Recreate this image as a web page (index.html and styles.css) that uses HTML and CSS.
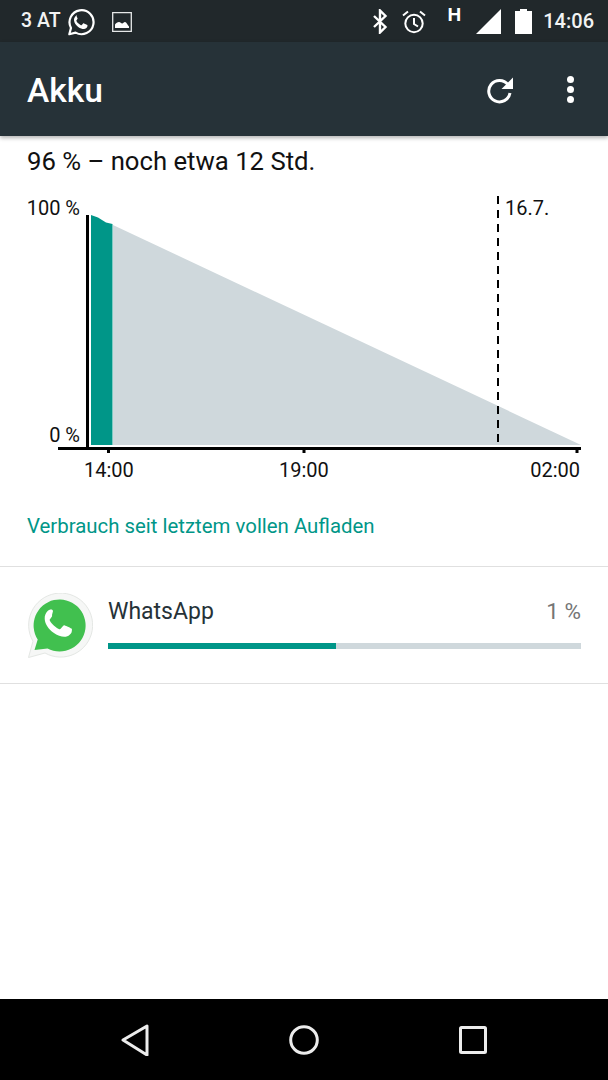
FILE: index.html
```html
<!DOCTYPE html>
<html lang="de">
<head>
<meta charset="utf-8">
<title>Akku</title>
<link rel="stylesheet" href="styles.css">
</head>
<body>
<div class="screen">
  <header class="status">
    <div class="status-left">
      <span class="carrier">3 AT</span>
      <svg class="ic-wa" viewBox="0 0 28 28"><path d="M2.3 26.2l1.7-6.3A12 12 0 1 1 8.600 24.600z" fill="none" stroke="#fff" stroke-width="2.200" stroke-linejoin="round"/><path d="M10.200 7.600c-.5 0-1.300.2-1.900 1-.6.800-1.400 2-1.300 3.700.2 2.600 2 5 4.200 6.700 2.200 1.600 4.300 2.200 5.800 2.100 1.500-.1 3-1.200 3.300-2.300.2-.8.200-1.500.1-1.700-.2-.3-3-1.600-3.500-1.700-.4-.1-.7 0-1 .4l-1.100 1.300c-.2.300-.5.300-.9.100-1.200-.5-3.600-2.300-4.500-4.200-.2-.4 0-.6.200-.8l.8-1.100c.2-.3.200-.6.100-.9l-1.200-2.800c-.1-.4-.3-.8-.8-.8z" fill="#fff"/></svg>
      <svg class="ic-img" viewBox="0 0 20 20"><path d="M.7.700h18.600v18.600H.7z" fill="none" stroke="#e6e8e8" stroke-width="1.300"/><path d="M3 16v-3.500c1-1.500 2.500-2.500 4-2.500 1.500 0 2 1.500 3.200 1.500 1 0 1.500-1.500 2.800-1.500 1.500 0 2.500 3 4 4.500V16z" fill="#fff"/></svg>
    </div>
    <div class="status-right">
      <svg class="ic-bt" viewBox="0 0 16 25"><path d="M2 7l11.500 11-5.500 5.500V1.500L13.500 7 2 18" fill="none" stroke="#fff" stroke-width="2.400"/></svg>
      <svg class="ic-alarm" viewBox="0 0 24 24"><circle cx="12" cy="13.500" r="8.700" fill="none" stroke="#fff" stroke-width="2"/><path d="M12 8v6l4 2.500M1 5.500L6 1.500M23 5.500L18 1.500" fill="none" stroke="#fff" stroke-width="2"/></svg>
      <span class="net">H</span>
      <svg class="ic-signal" viewBox="0 0 25 25"><path d="M0 25L25 0v25z" fill="#fff"/></svg>
      <svg class="ic-batt" viewBox="0 0 17 25"><path d="M5 0h7v2h5v23H0V2h5z" fill="#fff"/></svg>
      <span class="clock">14:06</span>
    </div>
  </header>

  <div class="appbar">
    <h1 class="title">Akku</h1>
    <div class="actions">
      <svg class="ic-refresh" viewBox="0 0 28 28"><path d="M22 8.700A10.700 10.700 0 1 0 24 17" fill="none" stroke="#fff" stroke-width="3"/><path d="M27 1.500V13H15.500z" fill="#fff"/></svg>
      <div class="dots"><i></i><i></i><i></i></div>
    </div>
  </div>

  <main class="content">
    <p class="summary">96 % – noch etwa 12 Std.</p>

    <div class="chart">
      <svg class="plot" viewBox="0 0 608 300" width="608" height="300">
        <path class="area" d="M113 36L581 256H113z"/>
        <path class="used" d="M91 26L98 28.500L106 33.500L112.500 35V256H91z"/>
        <path class="axis-y" d="M87.500 26V260"/>
        <path class="axis-x" d="M58 259.500H581"/>
        <path class="tick" d="M108.500 259V264M304 259V264M577 259V264"/>
        <path class="dash" d="M498 7V256"/>
      </svg>
      <span class="lbl lbl-100">100 %</span>
      <span class="lbl lbl-0">0 %</span>
      <span class="lbl lbl-date">16.7.</span>
      <span class="lbl lbl-t1">14:00</span>
      <span class="lbl lbl-t2">19:00</span>
      <span class="lbl lbl-t3">02:00</span>
    </div>

    <p class="since">Verbrauch seit letztem vollen Aufladen</p>

    <section class="app-row">
      <svg class="app-icon" viewBox="0 0 66 66">
        <path d="M1.500 64.500l4.500-16.300A32 32 0 1 1 18 60z" fill="#f6f7f6" stroke="#e4e7e4" stroke-width="1"/>
        <path d="M7.500 57l3.200-10.500A26 26 0 1 1 20.500 55.500z" fill="#41c04f"/>
        <path d="M24 16.500c-1 0-2.600.4-3.800 2-1.200 1.500-2.800 4-2.500 7.500.4 5.300 4 10.200 8.500 13.500 4.400 3.300 8.700 4.500 11.700 4.300 3-.2 6-2.400 6.700-4.600.4-1.600.4-3 .2-3.400-.4-.6-6-3.200-7-3.400-.8-.2-1.400 0-2 .8l-2.200 2.600c-.4.600-1 .6-1.800.2-2.400-1-7.200-4.600-9-8.400-.4-.8 0-1.200.4-1.600l1.600-2.200c.4-.6.400-1.200.2-1.800L26 18c-.2-.8-.6-1.500-2-1.500z" fill="#fff"/>
      </svg>
      <div class="app-body">
        <div class="app-head"><span class="app-name">WhatsApp</span><span class="app-pct">1 %</span></div>
        <div class="bar"><div class="bar-fill"></div></div>
      </div>
    </section>
  </main>

  <nav class="navbar">
    <svg class="nav-back" viewBox="0 0 28 32"><path d="M2 16L26 2v29z" fill="none" stroke="#ececec" stroke-width="3" stroke-linejoin="round"/></svg>
    <svg class="nav-home" viewBox="0 0 30 30"><circle cx="15" cy="15" r="13.300" fill="none" stroke="#ececec" stroke-width="3"/></svg>
    <svg class="nav-recent" viewBox="0 0 28 28"><rect x="1.500" y="1.500" width="25" height="25" rx="1" fill="none" stroke="#ececec" stroke-width="3"/></svg>
  </nav>
</div>
</body>
</html>
```
FILE: styles.css
```css
* { box-sizing: border-box; }
html, body { margin: 0; padding: 0; background: #fff; }
body { font-family: Roboto, "Liberation Sans", sans-serif; }
svg { display: block; flex: none; }

.screen { width: 608px; height: 1080px; display: flex; flex-direction: column; overflow: hidden; }

.status { height: 42px; background: #21282b; color: #fff; display: flex; justify-content: space-between; align-items: center; padding: 0 14px 0 21px; flex: none; }
.status-left, .status-right { display: flex; align-items: center; }
.carrier { font-size: 19.500px; font-weight: 500; line-height: 42px; color: #f2f3f3; }
.ic-wa { width: 28px; height: 28px; margin-left: 6px; margin-top: 1px; }
.ic-img { width: 20px; height: 20px; margin-left: 17px; margin-top: 1px; }
.ic-bt { width: 16px; height: 25px; margin-right: 14px; margin-top: 0; }
.ic-alarm { width: 24px; height: 24px; margin-right: 22px; margin-top: 1px; }
.net { font-size: 19px; font-weight: 900; line-height: 17px; margin-right: 15px; margin-top: -14px; font-family: "Liberation Sans", sans-serif; }
.ic-signal { width: 25px; height: 25px; margin-right: 14px; margin-top: 1px; }
.ic-batt { width: 17px; height: 25px; margin-right: 11px; margin-top: 1px; }
.clock { font-size: 20px; font-weight: 500; color: #f2f3f3; }

.appbar { height: 94px; background: #263238; display: flex; align-items: center; justify-content: space-between; padding: 0 34px 0 27px; box-shadow: 0 2px 4px rgba(0,0,0,.3); flex: none; position: relative; }
.title { margin: 4px 0 0; font-size: 33.500px; font-weight: 500; color: #fff; line-height: 1; }
.actions { display: flex; align-items: center; gap: 53px; margin-top: 1px; }
.ic-refresh { width: 28px; height: 28px; }
.dots { display: flex; flex-direction: column; gap: 3px; }
.dots i { display: block; width: 7px; height: 7px; border-radius: 50%; background: #fff; }

.content { flex: 1; display: flex; flex-direction: column; }
.summary { margin: 0; padding: 11px 0 0 27px; font-size: 25.700px; line-height: 28px; color: #111; font-weight: 400; height: 53px; white-space: nowrap; }

.chart { position: relative; height: 300px; }
.plot { position: absolute; left: 0; top: 0; }
.area { fill: #cfd8dc; }
.used { fill: #009688; }
.axis-y, .axis-x { stroke: #000; stroke-width: 3; fill: none; }
.tick { stroke: #000; stroke-width: 3; fill: none; }
.dash { stroke: #000; stroke-width: 2; stroke-dasharray: 8 6; fill: none; }
.lbl { position: absolute; font-size: 20px; line-height: 24px; color: #111; white-space: nowrap; }
.lbl-100 { right: 528px; top: 7px; }
.lbl-0 { right: 528px; top: 234px; }
.lbl-date { left: 505px; top: 7px; }
.lbl-t1 { left: 84px; top: 269px; }
.lbl-t2 { left: 279px; top: 269px; }
.lbl-t3 { right: 28px; top: 269px; }

.since { margin: 0; padding: 25px 27px 0; height: 78px; font-size: 20.400px; line-height: 24px; color: #009688; border-bottom: 1px solid #e0e0e0; }

.app-row { height: 117px; display: flex; padding: 26px 27px 0; border-bottom: 1px solid #e0e0e0; }
.app-icon { width: 66px; height: 66px; margin-right: 15px; }
.app-body { flex: 1; }
.app-head { display: flex; justify-content: space-between; align-items: center; height: 36px; font-size: 23px; }
.app-name { color: #263238; }
.app-pct { color: #757575; font-size: 22.500px; }
.bar { height: 6px; background: #cfd8dc; margin-top: 14px; }
.bar-fill { width: 48.200%; height: 100%; background: #009688; }

.navbar { height: 81px; background: #000; flex: none; display: flex; align-items: center; padding: 0 121px; justify-content: space-between; }
.nav-back { width: 28px; height: 32px; }
.nav-home { width: 30px; height: 30px; }
.nav-recent { width: 28px; height: 28px; }
```
